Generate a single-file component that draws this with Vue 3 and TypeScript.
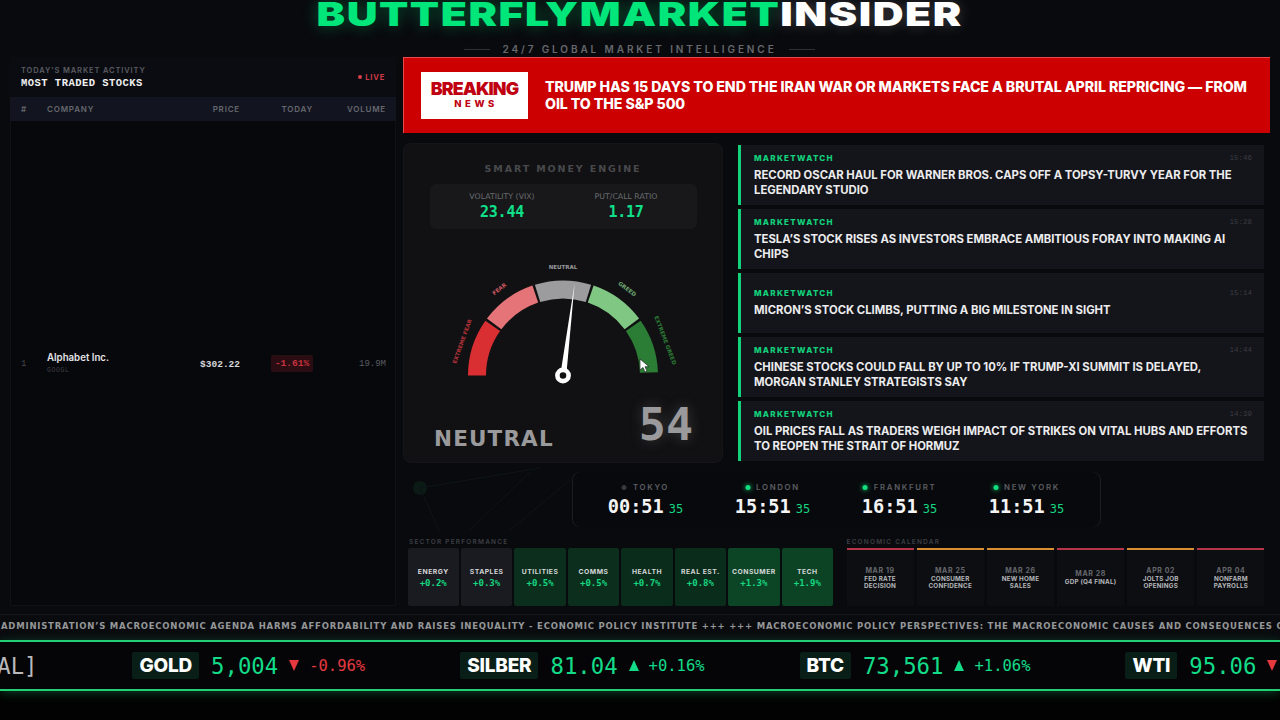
<script setup lang="ts">
const cx = 563 - 440
const cy = 375.5 - 260
const pt = (deg: number, r: number) => {
  const a = (Math.PI * deg) / 180
  return `${(cx - r * Math.cos(a)).toFixed(2)} ${(cy - r * Math.sin(a)).toFixed(2)}`
}
const arc = (a: number, b: number) => `M${pt(a, 86)} A86 86 0 0 1 ${pt(b, 86)}`
const segments = [
  { d: arc(0, 35.2), c: '#d92f33' },
  { d: arc(36.8, 71.2), c: '#e57479' },
  { d: arc(72.8, 107.2), c: '#9c9c9e' },
  { d: arc(108.8, 143.2), c: '#81c784' },
  { d: arc(144.8, 178), c: '#2b7d35' },
]
const news = [
  { t: '15:46', h: 'Record Oscar haul for Warner Bros. caps off a topsy-turvy year for the legendary studio' },
  { t: '15:28', h: 'Tesla’s stock rises as investors embrace ambitious foray into making AI chips' },
  { t: '15:14', h: 'Micron’s stock climbs, putting a big milestone in sight' },
  { t: '14:44', h: 'Chinese stocks could fall by up to 10% if Trump-Xi summit is delayed, Morgan Stanley strategists say' },
  { t: '14:39', h: 'Oil prices fall as traders weigh impact of strikes on vital hubs and efforts to reopen the Strait of Hormuz' },
]
const clocks = [
  { city: 'TOKYO', time: '00:51', open: false },
  { city: 'LONDON', time: '15:51', open: true },
  { city: 'FRANKFURT', time: '16:51', open: true },
  { city: 'NEW YORK', time: '11:51', open: true },
]
const sectors = [
  { n: 'ENERGY', v: '+0.2%', bg: '#1a1b20' },
  { n: 'STAPLES', v: '+0.3%', bg: '#1a1b20' },
  { n: 'UTILITIES', v: '+0.5%', bg: '#0b2e1d' },
  { n: 'COMMS', v: '+0.5%', bg: '#0b2e1d' },
  { n: 'HEALTH', v: '+0.7%', bg: '#0a2c1b' },
  { n: 'REAL EST.', v: '+0.8%', bg: '#0a2c1b' },
  { n: 'CONSUMER', v: '+1.3%', bg: '#0c4526' },
  { n: 'TECH', v: '+1.9%', bg: '#0b4324' },
]
const events = [
  { d: 'MAR 19', l: ['FED RATE', 'DECISION'], c: '#b8344a' },
  { d: 'MAR 25', l: ['CONSUMER', 'CONFIDENCE'], c: '#d98e32' },
  { d: 'MAR 26', l: ['NEW HOME', 'SALES'], c: '#d98e32' },
  { d: 'MAR 28', l: ['GDP (Q4 FINAL)'], c: '#b8344a' },
  { d: 'APR 02', l: ['JOLTS JOB', 'OPENINGS'], c: '#d98e32' },
  { d: 'APR 04', l: ['NONFARM', 'PAYROLLS'], c: '#b8344a' },
]
const quotes = [
  { s: 'GOLD', p: '5,004', up: false, c: '-0.96%' },
  { s: 'SILBER', p: '81.04', up: true, c: '+0.16%' },
  { s: 'BTC', p: '73,561', up: true, c: '+1.06%' },
  { s: 'WTI', p: '95.06', up: false, c: '-0.41%' },
]
const tape =
  'ADMINISTRATION’S MACROECONOMIC AGENDA HARMS AFFORDABILITY AND RAISES INEQUALITY - ECONOMIC POLICY INSTITUTE +++ +++ MACROECONOMIC POLICY PERSPECTIVES: THE MACROECONOMIC CAUSES AND CONSEQUENCES OF'
</script>

<template>
  <div class="page">
    <svg class="map" width="1280" height="720" viewBox="0 0 1280 720" aria-hidden="true">
      <circle cx="420" cy="488" r="7" fill="#0b1a15" />
      <path d="M420 488 L540 468 M420 488 L440 532 M470 530 L530 472 M510 530 L570 480" stroke="#0e1416" stroke-width="1" fill="none" />
    </svg>

    <header class="head">
      <h1 class="title"><span class="tgreen">BUTTERFLYMARKET</span><span class="twhite">INSIDER</span></h1>
      <div class="sub"><i></i><span>24/7 GLOBAL MARKET INTELLIGENCE</span><i></i></div>
    </header>

    <main class="main">
      <section class="stocks">
        <div class="stocks-head">
          <div>
            <div class="eyebrow">TODAY'S MARKET ACTIVITY</div>
            <div class="stocks-title">MOST TRADED STOCKS</div>
          </div>
          <div class="live"><b></b>LIVE</div>
        </div>
        <div class="cols row-grid">
          <span>#</span><span>COMPANY</span><span class="r">PRICE</span><span class="r">TODAY</span><span class="r">VOLUME</span>
        </div>
        <div class="stocks-body">
          <div class="row-grid stock">
            <span class="rank">1</span>
            <div><div class="co">Alphabet Inc.</div><div class="tk">GOOGL</div></div>
            <span class="r price">$302.22</span>
            <span class="r chg-wrap"><em class="chg">-1.61%</em></span>
            <span class="r vol">19.9M</span>
          </div>
        </div>
      </section>

      <div class="right">
        <section class="banner">
          <div class="bk"><div class="bk1">BREAKING</div><div class="bk2">NEWS</div></div>
          <p class="bk-text">TRUMP HAS 15 DAYS TO END THE IRAN WAR OR MARKETS FACE A BRUTAL APRIL REPRICING — FROM OIL TO THE S&amp;P 500</p>
        </section>

        <div class="mid">
          <section class="gauge">
            <div class="g-title">SMART MONEY ENGINE</div>
            <div class="stats">
              <div><div class="s-l">VOLATILITY (VIX)</div><div class="s-v">23.44</div></div>
              <div><div class="s-l">PUT/CALL RATIO</div><div class="s-v">1.17</div></div>
            </div>
            <svg class="dial" width="250" height="130" viewBox="0 0 250 130">
              <path v-for="s in segments" :key="s.c" :d="s.d" :stroke="s.c" stroke-width="18" fill="none" />
              <text class="lb" x="123" y="9" text-anchor="middle" fill="#9a9a9c">NEUTRAL</text>
              <text class="lb" transform="translate(60.5 30.5) rotate(-38)" text-anchor="middle" fill="#c9565f">FEAR</text>
              <text class="lb" transform="translate(186 30.5) rotate(37)" text-anchor="middle" fill="#6fa873">GREED</text>
              <text class="lb" transform="translate(24 82) rotate(-70)" text-anchor="middle" fill="#b53238">EXTREME FEAR</text>
              <text class="lb" transform="translate(223.5 81) rotate(69)" text-anchor="middle" fill="#2b7d35">EXTREME GREED</text>
              <polygon points="134.6,23.5 120.6,113 126.4,114" fill="#fff" />
              <circle :cx="cx" :cy="cy" r="5.6" fill="#111113" stroke="#fff" stroke-width="4.6" />
            </svg>
            <div class="g-foot">
              <span class="g-state">NEUTRAL</span>
              <span class="g-num">54</span>
            </div>
            <svg class="cursor" width="12" height="16" viewBox="0 0 12 16"><path d="M1 1 L1 12 L4 9.5 L6 14 L8 13 L6 8.8 L10 8.6 Z" fill="#fff" stroke="#222" stroke-width=".7" /></svg>
          </section>

          <section class="news">
            <article v-for="n in news" :key="n.t" class="item">
              <div class="item-top"><span class="src">MARKETWATCH</span><span class="time">{{ n.t }}</span></div>
              <div class="hl">{{ n.h }}</div>
            </article>
          </section>
        </div>

        <section class="clocks">
          <div v-for="c in clocks" :key="c.city" class="clock">
            <div class="city"><b :class="{ on: c.open }"></b>{{ c.city }}</div>
            <div class="clock-t">{{ c.time }}<small>35</small></div>
          </div>
        </section>

        <div class="lower">
          <section class="sectors">
            <div class="cap">SECTOR PERFORMANCE</div>
            <div class="tiles">
              <div v-for="s in sectors" :key="s.n" class="tile" :style="{ background: s.bg }">
                <div class="t-n">{{ s.n }}</div>
                <div class="t-v">{{ s.v }}</div>
              </div>
            </div>
          </section>
          <section class="cal">
            <div class="cap cap2">ECONOMIC CALENDAR</div>
            <div class="cards">
              <div v-for="e in events" :key="e.d" class="card" :style="{ borderTopColor: e.c }">
                <div class="c-d">{{ e.d }}</div>
                <div v-for="l in e.l" :key="l" class="c-l">{{ l }}</div>
              </div>
            </div>
          </section>
        </div>
      </div>
    </main>

    <div class="tape"><span>{{ tape }}</span></div>

    <div class="ticker">
      <div class="track">
        <span class="stub">[GLOBAL]</span>
        <div v-for="q in quotes" :key="q.s" class="quote">
          <span class="sym">{{ q.s }}</span>
          <span class="px">{{ q.p }}</span>
          <span class="arrow" :class="q.up ? 'up' : 'down'"></span>
          <span class="pct" :class="q.up ? 'gr' : 'rd'">{{ q.c }}</span>
        </div>
      </div>
    </div>
    <div class="foot"></div>
  </div>
</template>

<style>
html, body { margin: 0; background: #000; }
</style>

<style scoped>
.page {
  position: relative;
  display: flex;
  flex-direction: column;
  width: 1280px;
  height: 720px;
  overflow: hidden;
  background: #090a0e;
  font-family: Inter, "Liberation Sans", sans-serif;
  color: #fff;
}
.map { position: absolute; left: 0; top: 0; pointer-events: none; }
.head { position: relative; height: 57px; flex: none; text-align: center; }
.title {
  margin: 0;
  height: 40px;
  font-size: 33px;
  line-height: 28px;
  font-weight: 900;
  letter-spacing: 1.2px;
  white-space: nowrap;
  transform: scaleX(1.294);
  transform-origin: 641px 0;
}
.tgreen { color: #00e67a; text-shadow: 0 0 14px rgba(0, 230, 122, .35); }
.twhite { color: #fff; text-shadow: 0 0 12px rgba(255, 255, 255, .2); }
.sub {
  display: flex;
  justify-content: center;
  align-items: center;
  gap: 12px;
  margin-top: 2px;
  padding-right: 1px;
  font-size: 10px;
  line-height: 14px;
  font-weight: 600;
  letter-spacing: 2.9px;
  color: #66686c;
}
.sub i { width: 26px; height: 1px; background: #2c2f33; }
.main { position: relative; display: flex; flex: none; gap: 7px; height: 549px; padding: 0 10px; }
.stocks {
  width: 386px;
  display: flex;
  flex-direction: column;
  background: #07080c;
  box-shadow: inset 0 0 0 1px #0f1116;
}
.stocks-head {
  height: 40px;
  display: flex;
  align-items: center;
  justify-content: space-between;
  padding: 0 11px;
  background: #0b0c11;
}
.eyebrow { font-size: 7.5px; line-height: 10px; letter-spacing: .87px; font-weight: 600; color: #5b5d63; padding-top: 1px; }
.stocks-title {
  margin-top: 1px;
  font-family: "Liberation Mono", monospace;
  font-size: 10.5px;
  line-height: 13px;
  font-weight: 700;
  letter-spacing: .47px;
  color: #f0f0f0;
}
.live { display: flex; align-items: center; gap: 3px; font-size: 7.5px; font-weight: 700; letter-spacing: .8px; color: #cc3b44; }
.live b { width: 4px; height: 4px; border-radius: 50%; background: #d8404a; }
.row-grid {
  display: grid;
  grid-template-columns: 26px 1fr 60px 73px 73px;
  align-items: center;
  padding: 0 10px 0 11px;
}
.r { text-align: right; }
.cols {
  height: 24px;
  background: #12141f;
  font-size: 8px;
  font-weight: 600;
  letter-spacing: .8px;
  color: #66686f;
}
.stocks-body { flex: 1; display: flex; flex-direction: column; justify-content: center; }
.stock { height: 44px; }
.rank { font-family: "Liberation Mono", monospace; font-size: 9px; color: #44464b; }
.co { font-size: 9.7px; line-height: 13px; font-weight: 600; color: #e4e4e6; margin-top: -1px; }
.tk { font-family: "Liberation Mono", monospace; font-size: 6.5px; line-height: 11px; letter-spacing: .6px; color: #3d3f44; margin-top: 1px; }
.price { font-family: "Liberation Mono", monospace; font-size: 9.5px; font-weight: 700; letter-spacing: 0; color: #d8d8da; padding-top: 1px; }
.chg-wrap { display: flex; justify-content: flex-end; }
.chg {
  display: block;
  box-sizing: border-box;
  width: 42px;
  height: 17px;
  text-align: center;
  border-radius: 2px;
  background: #2a0d12;
  font-family: "Liberation Mono", monospace;
  font-size: 9.5px;
  line-height: 17px;
  font-style: normal;
  font-weight: 700;
  color: #c8323f;
}
.vol { font-family: "Liberation Mono", monospace; font-size: 9px; color: #5a5c62; }

.right { width: 867px; display: flex; flex-direction: column; }
.banner {
  box-sizing: border-box;
  height: 76px;
  flex: none;
  display: flex;
  align-items: center;
  gap: 17px;
  padding: 0 18px;
  background: #cc0000;
  box-shadow: inset 1px 1px 0 #e84a4a;
}
.bk {
  box-sizing: border-box;
  width: 107px;
  height: 47px;
  flex: none;
  background: #fff;
  text-align: center;
  color: #c00010;
  padding-top: 7px;
}
.bk1 { font-size: 17.8px; line-height: 19px; font-weight: 900; letter-spacing: -.9px; }
.bk2 { font-size: 9.5px; line-height: 12px; font-weight: 800; letter-spacing: 3.6px; padding-left: 3px; }
.bk-text { margin: 0; font-size: 14.2px; line-height: 17px; font-weight: 800; letter-spacing: -.085px; color: #fff; }

.mid { display: flex; gap: 15px; margin-top: 10px; height: 320px; flex: none; }
.gauge {
  position: relative;
  box-sizing: border-box;
  width: 320px;
  height: 320px;
  flex: none;
  display: flex;
  flex-direction: column;
  padding-top: 20px;
  border-radius: 8px;
  background: #111113;
  box-shadow: inset 0 0 0 1px #151517;
  font-family: "DejaVu Sans", sans-serif;
}
.g-title { text-align: center; font-size: 9.5px; line-height: 12px; font-weight: 700; letter-spacing: 1.9px; color: #48494c; }
.stats {
  box-sizing: border-box;
  display: grid;
  grid-template-columns: 1fr 1fr;
  width: 267px;
  height: 45px;
  margin: 9px 0 0 27px;
  padding: 8px 9px 0 10px;
  border-radius: 6px;
  background: #18181a;
  text-align: center;
}
.s-l { font-size: 7.8px; line-height: 10px; font-weight: 400; color: #6a6b6f; }
.s-v { font-family: "DejaVu Sans Mono", monospace; font-size: 15px; line-height: 18px; font-weight: 700; letter-spacing: -.22px; color: #0fe08a; margin-top: 1px; }
.dial { display: block; margin: 31px 0 0 37px; overflow: visible; flex: none; }
.lb { font-family: "DejaVu Sans", sans-serif; font-size: 5.5px; font-weight: 700; }
.g-foot { display: flex; justify-content: space-between; align-items: flex-end; padding: 0 30px 0 31px; margin-top: 12px; }
.g-state { font-size: 21.5px; line-height: 24px; font-weight: 700; letter-spacing: 1.15px; color: #9a9a9c; margin-bottom: -1px; }
.g-num {
  font-family: "DejaVu Sans Mono", monospace;
  font-size: 45px;
  line-height: 46px;
  font-weight: 700;
  color: #9a9a9c;
  margin-bottom: 2px;
  text-shadow: 0 0 14px rgba(160, 160, 160, .3);
}
.cursor { position: absolute; left: 236px; top: 215px; }

.news { width: 526px; display: flex; flex-direction: column; gap: 4px; padding-top: 2px; }
.item {
  box-sizing: border-box;
  height: 60px;
  display: flex;
  flex-direction: column;
  justify-content: center;
  padding: 1px 12px 0 13px;
  background: #14151a;
  border-left: 3px solid #12d27c;
}
.item-top { display: flex; justify-content: space-between; align-items: center; line-height: 11px; }
.src { font-size: 8px; font-weight: 800; letter-spacing: 1.3px; color: #12d27c; }
.time { font-family: "Liberation Mono", monospace; font-size: 7.5px; color: #3b3c41; }
.hl { margin-top: 4px; font-size: 11.3px; line-height: 15.5px; font-weight: 700; text-transform: uppercase; color: #ececee; }

.clocks {
  box-sizing: border-box;
  display: grid;
  grid-template-columns: repeat(4, 127px);
  justify-content: center;
  align-items: center;
  width: 529px;
  height: 55px;
  margin: 9px 0 0 169px;
  flex: none;
  border-radius: 8px;
  background: #08090c;
  box-shadow: inset 1px 0 0 #1a1e22, inset -1px 0 0 #1a1e22;
}
.clock { text-align: center; padding-top: 3px; transform: translateX(-.5px); }
.city { display: flex; justify-content: center; align-items: center; gap: 6px; font-size: 7.8px; line-height: 11px; font-weight: 600; letter-spacing: 1.7px; color: #5d5f63; }
.city b { width: 5px; height: 5px; border-radius: 50%; background: #37383b; }
.city b.on { background: #10dd7c; box-shadow: 0 0 5px #10dd7c; }
.clock-t { font-family: "DejaVu Sans Mono", monospace; font-size: 18.6px; line-height: 23px; font-weight: 700; color: #f4f4f4; margin-top: 2px; }
.clock-t small { margin-left: 5px; font-size: 12px; font-weight: 400; color: #14d882; }

.lower { display: flex; margin-top: 9px; padding-left: 4.5px; gap: 13.5px; }
.cap { font-size: 6.5px; line-height: 11px; font-weight: 600; letter-spacing: 1.2px; color: #3d3f43; padding: 1px 0 0 1.5px; margin-bottom: -1px; }
.cap2 { padding-left: 0; }
.sectors { width: 425.5px; }
.tiles { display: grid; grid-template-columns: repeat(8, 1fr); gap: 2px; margin-top: 1px; }
.tile { height: 58px; border-radius: 2px; display: flex; flex-direction: column; align-items: center; justify-content: center; padding-top: 1px; box-sizing: border-box; }
.t-n { font-size: 6.8px; line-height: 10px; font-weight: 700; letter-spacing: .5px; color: #d4d6d8; }
.t-v { font-family: "DejaVu Sans Mono", monospace; font-size: 9px; line-height: 12px; font-weight: 700; color: #14d882; }
.cal { width: 418px; }
.cards { display: grid; grid-template-columns: repeat(6, 1fr); gap: 3px; margin-top: 1px; }
.card {
  box-sizing: border-box;
  height: 58px;
  display: flex;
  flex-direction: column;
  align-items: center;
  justify-content: center;
  background: #0d0e12;
  border-top: 2px solid;
}
.c-d { font-size: 7px; line-height: 10px; font-weight: 700; letter-spacing: .6px; color: #66686d; }
.c-l { font-size: 6.3px; line-height: 7.5px; font-weight: 700; letter-spacing: .2px; color: #b5b7ba; }

.tape {
  box-sizing: border-box;
  height: 24px;
  flex: none;
  margin-top: 8px;
  padding: 0 0 2px 1px;
  display: flex;
  align-items: center;
  white-space: nowrap;
  overflow: hidden;
  background: #0a0b0e;
  border-top: 1px solid #15171b;
  font-family: "DejaVu Sans", sans-serif;
  font-size: 8.5px;
  font-weight: 700;
  letter-spacing: .78px;
  color: #959799;
}
.ticker {
  position: relative;
  z-index: 1;
  box-sizing: border-box;
  height: 51px;
  flex: none;
  margin-top: 2px;
  display: flex;
  align-items: center;
  background: #050507;
  border-top: 2px solid #22cf74;
  border-bottom: 2px solid #22cf74;
  box-shadow: 0 2px 10px rgba(34, 207, 116, .3);
}
.foot { flex: 1; background: #020202; }
.track { display: flex; align-items: center; gap: 95px; margin-left: -69.5px; white-space: nowrap; overflow: visible; }
.stub { font-family: "DejaVu Sans Mono", monospace; font-size: 22.2px; color: #b9b9bb; }
.quote { display: flex; align-items: center; }
.sym {
  box-sizing: border-box;
  height: 27px;
  padding: 0 7px;
  border-radius: 2px;
  background: #0a1e18;
  font-size: 19px;
  line-height: 27px;
  font-weight: 800;
  letter-spacing: -.2px;
  color: #fff;
}
.px { margin-left: 12px; font-family: "DejaVu Sans Mono", monospace; font-size: 22.3px; color: #12dc88; }
.arrow { margin-left: 11px; width: 0; height: 0; border-left: 5px solid transparent; border-right: 5px solid transparent; }
.up { border-bottom: 11px solid #12dc88; }
.down { border-top: 11px solid #e5383f; }
.pct { margin-left: 10px; font-family: "DejaVu Sans Mono", monospace; font-size: 15.5px; }
.gr { color: #12dc88; }
.rd { color: #e5383f; }
</style>
